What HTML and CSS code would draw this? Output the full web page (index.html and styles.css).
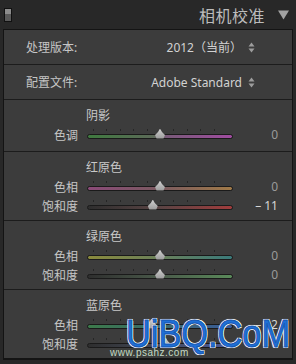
FILE: index.html
```html
<!DOCTYPE html>
<html lang="zh-CN">
<head>
  <meta charset="UTF-8" />
  <meta name="viewport" content="width=device-width, initial-scale=1.0" />
  <title>相机校准</title>
  <link rel="stylesheet" href="styles.css">
</head>
<body>
  <div class="header">
    <span class="switch"><span></span></span>
    <span class="title">相机校准</span>
    <svg class="caret" width="11" height="10" viewBox="0 0 11 10"><path d="M0 0.5H11L5.5 9.5Z" fill="#a2a2a2"/></svg>
  </div>

  <div class="panel">
    <div class="row">
      <span class="row-label">处理版本:</span>
      <span class="row-value">2012（当前）
        <svg class="updown" width="7" height="11" viewBox="0 0 7 11"><path d="M0.5 4.5L3.5 0.5L6.5 4.5Z M0.5 6.5L3.5 10.5L6.5 6.5Z" fill="#9c9c9c"/></svg>
      </span>
    </div>
    <div class="row">
      <span class="row-label">配置文件:</span>
      <span class="row-value">Adobe Standard
        <svg class="updown" width="7" height="11" viewBox="0 0 7 11"><path d="M0.5 4.5L3.5 0.5L6.5 4.5Z M0.5 6.5L3.5 10.5L6.5 6.5Z" fill="#9c9c9c"/></svg>
      </span>
    </div>

    <div class="group single">
      <div class="group-title">阴影</div>
      <div class="slider-row">
        <span class="s-label">色调</span>
        <div class="track tint"><span class="thumb" style="left: 50%"></span></div>
        <span class="s-value">0</span>
      </div>
    </div>

    <div class="group">
      <div class="group-title">红原色</div>
      <div class="slider-row">
        <span class="s-label">色相</span>
        <div class="track red-hue"><span class="thumb" style="left: 50%"></span></div>
        <span class="s-value">0</span>
      </div>
      <div class="slider-row">
        <span class="s-label">饱和度</span>
        <div class="track red-sat"><span class="thumb" style="left: 45%"></span></div>
        <span class="s-value strong">– 11</span>
      </div>
    </div>

    <div class="group">
      <div class="group-title">绿原色</div>
      <div class="slider-row">
        <span class="s-label">色相</span>
        <div class="track green-hue"><span class="thumb" style="left: 50%"></span></div>
        <span class="s-value">0</span>
      </div>
      <div class="slider-row">
        <span class="s-label">饱和度</span>
        <div class="track green-sat"><span class="thumb" style="left: 50%"></span></div>
        <span class="s-value">0</span>
      </div>
    </div>

    <div class="group last">
      <div class="group-title">蓝原色</div>
      <div class="slider-row">
        <span class="s-label">色相</span>
        <div class="track blue-hue"><span class="thumb" style="left: 44%"></span></div>
        <span class="s-value strong">– 12</span>
      </div>
      <div class="slider-row">
        <span class="s-label">饱和度</span>
        <div class="track blue-sat"><span class="thumb" style="left: 54%"></span></div>
        <span class="s-value">0</span>
      </div>
    </div>
  </div>

  <div class="watermark">UiBQ.CoM</div>
  <div class="watermark-url">www.psahz.com</div>
</body>
</html>
```

FILE: styles.css
```css
body {
  margin: 0;
  width: 296px;
  height: 364px;
  overflow: hidden;
  background: #282828;
  color: #c6c6c6;
  font-family: "Noto Sans", "Noto Sans CJK SC", sans-serif;
  font-size: 12px;
  position: relative;
}
.header {
  height: 29px;
  display: flex;
  align-items: center;
}
.switch {
  margin-left: 4px;
  width: 6px;
  height: 12px;
  border: 1px solid #111;
  background: #5a5a5a;
  display: flex;
  flex-direction: column;
}
.switch span {
  height: 5px;
  background: #8c8c8c;
}
.title {
  margin-left: auto;
  font-size: 16px;
  color: #bcbcbc;
  letter-spacing: 0.5px;
}
.caret {
  margin: 1px 7px 0 13px;
}
.panel {
  margin: 0 3px;
  background: #3c3c3c;
  border: 1px solid #141414;
  border-bottom-width: 2px;
}
.row {
  height: 34px;
  border-bottom: 1px solid #1c1c1c;
  display: flex;
  align-items: center;
  justify-content: space-between;
  padding: 0 37px 0 22px;
  font-size: 12px;
}
.row-value {
  display: flex;
  align-items: center;
  gap: 6px;
  color: #d2d2d2;
}
.group {
  padding: 7px 0 5px;
  border-bottom: 1px solid #1c1c1c;
}
.group.single {
  padding-bottom: 7px;
}
.group.last {
  border-bottom: none;
}
.group-title {
  height: 18px;
  line-height: 18px;
  padding-left: 82px;
  color: #c8c8c8;
}
.slider-row {
  height: 19px;
  display: grid;
  grid-template-columns: 74px 146px 1fr;
  column-gap: 9px;
  align-items: center;
  padding-right: 14px;
}
.slider-row:first-of-type {
  margin-top: 1px;
}
.s-label {
  text-align: right;
}
.s-value {
  text-align: right;
  color: #9a9a9a;
}
.s-value.strong {
  color: #d6d6d6;
}
.track {
  position: relative;
  height: 3px;
  border: 1px solid #1a1a1a;
  border-radius: 3px;
  margin-top: 3px;
}
.track::before {
  content: "";
  position: absolute;
  left: 5px;
  right: 5px;
  top: -6px;
  height: 2px;
  background: repeating-linear-gradient(90deg, #262626 0, #262626 1px, transparent 1px, transparent 13.4px);
}
.thumb {
  position: absolute;
  top: -6px;
  width: 10px;
  height: 10px;
  margin-left: -5px;
  background: linear-gradient(#cfcfcf, #9a9a9a);
  clip-path: polygon(50% 0, 70% 35%, 100% 65%, 85% 100%, 15% 100%, 0 65%, 30% 35%);
}
.tint { background: linear-gradient(90deg, #3f7a3f, #5c6a58 45%, #7a5a7a 55%, #a04ca0); }
.red-hue { background: linear-gradient(90deg, #8a4a78, #7a5a60 50%, #a07a48); }
.red-sat { background: linear-gradient(90deg, #2e2e2e, #5a4444 50%, #a03c3c); }
.green-hue { background: linear-gradient(90deg, #8a8a3c, #6a805a 50%, #3a7a7a); }
.green-sat { background: linear-gradient(90deg, #2e2e2e, #4a5a4a 50%, #5a8a5a); }
.blue-hue { background: linear-gradient(90deg, #3c7a4a, #3a6a6a 50%, #3a5a9a); }
.blue-sat { background: linear-gradient(90deg, #2e2e2e, #444a5a 50%, #4a5a9a); }
.watermark {
  position: absolute;
  left: 126px;
  top: 312px;
  font-family: "Liberation Sans", sans-serif;
  font-size: 39px;
  color: #1f6fd6;
  transform: scaleX(0.88);
  transform-origin: left top;
  -webkit-text-stroke: 1px #1556b0;
  text-shadow: 0 0 2px #fff, 1px 1px 0 #fff, -1px -1px 0 #fff, 1px -1px 0 #fff, -1px 1px 0 #fff;
}
.watermark-url {
  position: absolute;
  left: 110px;
  top: 347px;
  font-family: "Liberation Sans", sans-serif;
  font-size: 10px;
  letter-spacing: 0.5px;
  color: #c9d4c9;
  text-shadow: 0 0 1px #2f5a2f;
}
```
